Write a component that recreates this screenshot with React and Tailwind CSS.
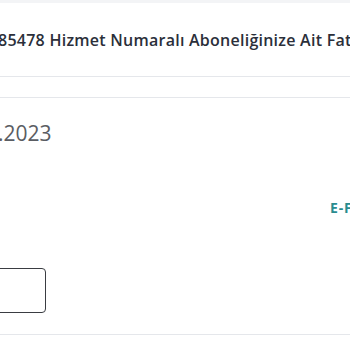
export default function App() {
  return (
    <div
      className="w-[350px] h-[350px] overflow-hidden bg-white"
      style={{ fontFamily: "'Open Sans', 'Noto Sans', sans-serif" }}
    >
      <div className="h-[3px] bg-[#f3f4f6]"></div>

      {/* header */}
      <div className="h-[74px] flex items-center border-b border-[#e5e7eb] whitespace-nowrap -ml-[2px]">
        <span className="text-[16px] font-semibold text-[#2b2f3a] tracking-[0.25px]">
          85478 Hizmet Numaralı Aboneliğinize Ait Faturalar
        </span>
      </div>

      <div className="h-[21px] border-b border-[#e5e7eb]"></div>

      {/* date */}
      <div className="pt-[20px] h-[80px] -ml-[2px] whitespace-nowrap">
        <span className="text-[21px] text-[#5a5d63]">.2023</span>
      </div>

      {/* link */}
      <div className="h-[80px] pt-[19px] pl-[330px] flex whitespace-nowrap overflow-hidden">
        <span className="text-[14px] font-bold text-[#2a8c8f] tracking-[0.8px]">E-Fatura</span>
      </div>

      {/* box */}
      <div className="h-[76px] pt-[10px]">
        <div className="w-[60px] h-[45px] -ml-[14px] border-[1.5px] border-[#3a3d42] rounded-[4px]"></div>
      </div>

      <div className="border-t border-[#e5e7eb]"></div>
    </div>
  );
}
